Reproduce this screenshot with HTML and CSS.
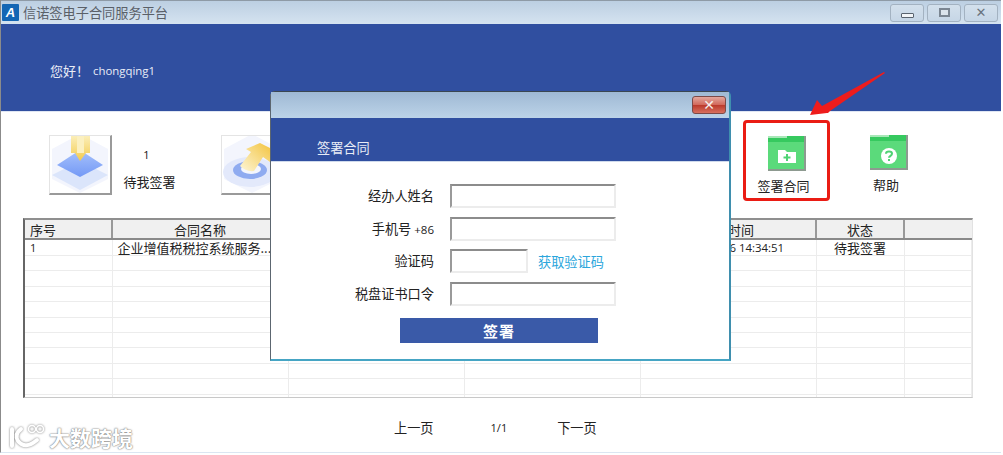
FILE: index.html
```html
<!DOCTYPE html>
<html lang="zh-CN">
  <head>
    <meta charset="UTF-8" />
    <title>信诺签电子合同服务平台</title>
    <link rel="stylesheet" href="styles.css">
  </head>
  <body>
    <div class="window">
      <!-- title bar -->
      <div class="titlebar">
        <span class="app-logo">A</span>
        <span class="app-title">信诺签电子合同服务平台</span>
        <div class="win-buttons">
          <span class="win-btn"><i class="glyph-min"></i></span>
          <span class="win-btn"><i class="glyph-max"></i></span>
          <span class="win-btn glyph-close">&#10005;</span>
        </div>
      </div>

      <div class="banner">
        <span class="hello">您好！</span>
        <span class="user">chongqing1</span>
      </div>

      <!-- toolbar -->
      <div class="toolbar">
        <div class="tool tool-count">
          <div class="tile">
            <svg width="60" height="57" viewBox="0 0 60 57">
              <defs>
                <linearGradient id="pin" x1="0" y1="0" x2="0" y2="1">
                  <stop offset="0" stop-color="#fbeeb8" />
                  <stop offset="1" stop-color="#f3cb4e" />
                </linearGradient>
                <linearGradient id="plate" x1="0" y1="0" x2="0" y2="1">
                  <stop offset="0" stop-color="#a8c2fb" />
                  <stop offset="1" stop-color="#7399f6" />
                </linearGradient>
              </defs>
              <path d="M30 -2 L58 13 V43 L30 57 L2 43 V13 Z" fill="#f3f5fd" />
              <path d="M30 25 L58 39 L30 54 L2 39 Z" fill="#dbe5fb" />
              <path d="M7 29 L30 14 L53 29 L30 41 Z" fill="url(#plate)" />
              <path d="M21 0 H40 V17 H36 L30 25 L25 17 H21 Z" fill="url(#pin)" />
              <rect x="27" width="7" height="17" fill="#fbf0c0" />
            </svg>
          </div>
          <div class="tool-info">
            <span class="num">1</span>
            <span>待我签署</span>
          </div>
        </div>

        <div class="tool tool-wide">
          <div class="tile">
            <svg width="60" height="57" viewBox="0 0 60 57">
              <defs>
                <linearGradient id="lift" x1="0" y1="1" x2="1" y2="0">
                  <stop offset="0" stop-color="#fdf6d8" />
                  <stop offset="1" stop-color="#f3c440" />
                </linearGradient>
              </defs>
              <path d="M30 -2 L58 13 V43 L30 57 L2 43 V13 Z" fill="#f3f5fd" />
              <ellipse cx="28" cy="36" rx="27" ry="15" fill="#e3e9fb" />
              <ellipse cx="28" cy="34" rx="17" ry="9" fill="#8fabf0" />
              <ellipse cx="29" cy="33" rx="10" ry="5" fill="#f4f6fd" />
              <path d="M18 30 L29 16 L24 13 L38 7 L48 12 L48 26 L41 21 L32 35 Q24 36 18 30 Z" fill="url(#lift)" />
            </svg>
          </div>
        </div>

        <div class="tool tool-sign">
          <svg class="folder" width="38" height="35" viewBox="0 0 38 35">
            <rect width="38" height="35" fill="#8d9a90" />
            <rect width="36" height="33" fill="#5bda7b" />
            <rect width="36" height="6" fill="#36c95f" />
            <rect width="19" height="2" fill="#a8e8b8" />
            <path d="M10 14 H17 L19 16 H28 V27 H10 Z" fill="#fff" />
            <path d="M18 18 H20 V20.500 H22.500 V22.500 H20 V25 H18 V22.500 H15.500 V20.500 H18 Z" fill="#4fd273" />
          </svg>
          <span class="tool-label">签署合同</span>
        </div>

        <div class="tool tool-help">
          <svg class="folder" width="38" height="35" viewBox="0 0 38 35">
            <rect width="38" height="35" fill="#8d9a90" />
            <rect width="36" height="33" fill="#5bda7b" />
            <rect width="36" height="6" fill="#36c95f" />
            <rect width="19" height="2" fill="#a8e8b8" />
            <circle cx="19" cy="21" r="8" fill="#fff" />
            <path d="M16 18.800 C16 15.800 22 15.800 22 18.800 C22 20.800 19 20.800 19 22.800" fill="none" stroke="#4fd273" stroke-width="2" />
            <rect x="18" y="24" width="2" height="2" fill="#4fd273" />
          </svg>
          <span class="tool-label">帮助</span>
        </div>
      </div>

      <!-- contract list -->
      <div class="grid-wrap">
        <table class="grid">
          <colgroup>
            <col class="c1" /><col class="c2" /><col class="c3" /><col class="c3" /><col class="c3" /><col class="c4" /><col />
          </colgroup>
          <thead>
            <tr><th class="left">序号</th><th>合同名称</th><th></th><th></th><th>发起时间</th><th>状态</th><th></th></tr>
          </thead>
          <tbody>
            <tr>
              <td class="seq">1</td>
              <td class="name">企业增值税税控系统服务...</td>
              <td></td>
              <td></td>
              <td class="time">6 14:34:51</td>
              <td class="center">待我签署</td>
              <td></td>
            </tr>
            <tr><td></td><td></td><td></td><td></td><td></td><td></td><td></td></tr>
            <tr><td></td><td></td><td></td><td></td><td></td><td></td><td></td></tr>
            <tr><td></td><td></td><td></td><td></td><td></td><td></td><td></td></tr>
            <tr><td></td><td></td><td></td><td></td><td></td><td></td><td></td></tr>
            <tr><td></td><td></td><td></td><td></td><td></td><td></td><td></td></tr>
            <tr><td></td><td></td><td></td><td></td><td></td><td></td><td></td></tr>
            <tr><td></td><td></td><td></td><td></td><td></td><td></td><td></td></tr>
            <tr><td></td><td></td><td></td><td></td><td></td><td></td><td></td></tr>
            <tr><td></td><td></td><td></td><td></td><td></td><td></td><td></td></tr>
            <tr><td></td><td></td><td></td><td></td><td></td><td></td><td></td></tr>
          </tbody>
        </table>
      </div>

      <div class="pager">
        <span>上一页</span>
        <span class="page-num">1/1</span>
        <span>下一页</span>
      </div>

      <!-- sign dialog -->
      <div class="dialog">
        <div class="dialog-bar">
          <span class="dialog-close">&#10005;</span>
        </div>
        <div class="dialog-head">签署合同</div>
        <form class="dialog-form">
          <label>经办人姓名</label>
          <input type="text" />
          <label>手机号 <small>+86</small></label>
          <input type="text" />
          <label>验证码</label>
          <div class="code-row">
            <input type="text" class="code" />
            <a class="get-code">获取验证码</a>
          </div>
          <label>税盘证书口令</label>
          <input type="text" />
        </form>
        <div class="dialog-submit">签署</div>
      </div>

      <!-- annotation over the screenshot -->
      <svg class="arrow" width="80" height="50" viewBox="0 0 80 50">
        <path d="M1 44 L8 29 L13 35 L75 1 L76 2 L21 40 L19 42 L18 42 Z" fill="#ee1c1c" />
      </svg>

      <div class="watermark">
        <svg width="38" height="26" viewBox="0 0 38 26">
          <path d="M4 5 V22 M13 5 Q6 10 10 17 Q17 26 29 16" fill="none" stroke="#fff" stroke-width="4" stroke-linecap="round" />
          <circle cx="24" cy="5" r="3.500" fill="none" stroke="#fff" stroke-width="1.500" />
          <circle cx="32" cy="5" r="3.500" fill="none" stroke="#fff" stroke-width="1.500" />
        </svg>
        <span>大数跨境</span>
      </div>
    </div>
  </body>
</html>
```

FILE: styles.css
```css
* {
  box-sizing: border-box;
}

body {
  margin: 0;
  background: #fff;
  font-family: "Noto Sans CJK SC", "Liberation Sans", sans-serif;
  font-size: 13px;
  color: #222;
  overflow: hidden;
}

.window {
  position: relative;
  width: 1001px;
  height: 453px;
  border-left: 1px solid #8b8b8b;
  border-bottom: 1px solid #dbe6f2;
  display: flex;
  flex-direction: column;
}

/* title bar */
.titlebar {
  height: 24px;
  flex: none;
  display: flex;
  align-items: center;
  padding-left: 1px;
  border-top: 1px solid #8e9aa6;
  background: linear-gradient(#bccfe2, #d5e3f0);
}

.app-logo {
  width: 17px;
  height: 17px;
  background: #1466b4;
  color: #fff;
  font: italic bold 13px/17px "Liberation Sans", sans-serif;
  text-align: center;
  border-radius: 1px;
}

.app-title {
  margin-left: 4px;
  color: #5a6068;
  font-size: 13.200px;
}

.win-buttons {
  margin-left: auto;
  margin-right: 3px;
  display: flex;
  gap: 3px;
}

.win-btn {
  width: 34px;
  height: 18px;
  border: 1px solid #a3b2c1;
  border-radius: 3px;
  background: linear-gradient(#d3e0ec, #c6d6e6);
  display: flex;
  align-items: center;
  justify-content: center;
}

.glyph-min {
  width: 13px;
  height: 5px;
  margin-top: 5px;
  background: #f2f5f8;
  border: 1px solid #59636e;
  border-radius: 1px;
}

.glyph-max {
  width: 11px;
  height: 9px;
  background: #dbe4ec;
  border: 2px solid #7b8692;
}

.glyph-close {
  color: #6a747e;
  font: bold 13px/16px "DejaVu Sans", sans-serif;
}

.banner {
  height: 88px;
  flex: none;
  display: flex;
  align-items: center;
  gap: 4px;
  padding: 5px 0 0 49px;
  background: #304fa0;
  color: #e8ecf6;
  border-bottom: 1px solid #dfe6f3;
}

.user {
  font-family: "Open Sans", sans-serif;
  font-size: 11.400px;
}

/* toolbar */
.toolbar {
  height: 106px;
  flex: none;
  display: flex;
  padding: 8px 0 0 48px;
}

.tool {
  display: flex;
}

.tool-count {
  width: 172px;
}

.tool-wide {
  width: 522px;
}

.tile {
  width: 63px;
  height: 60px;
  margin-top: 15px;
  background: #fff;
  border-top: 1px solid #e4e4e4;
  border-left: 1px solid #e4e4e4;
  border-right: 2px solid #9a9a9a;
  border-bottom: 2px solid #9a9a9a;
}

.tile svg {
  display: block;
}

.tool-info {
  width: 75px;
  padding-top: 28px;
  display: flex;
  flex-direction: column;
  align-items: center;
  gap: 10px;
}

.num {
  margin-right: 6px;
  font: 11px/14px "Open Sans", sans-serif;
  color: #111;
}

.tool-sign,
.tool-help {
  flex-direction: column;
  align-items: center;
  color: #222;
}

.tool-sign {
  width: 87px;
  height: 81px;
  padding-top: 13px;
  border: 3px solid #ea1c14;
  border-radius: 4px;
}

.tool-help {
  width: 78px;
  margin-left: 20px;
  padding-top: 15px;
}

.tool-label {
  margin-right: 6px;
}

.folder {
  flex: none;
  margin-bottom: 5px;
}

/* contract list */
.grid-wrap {
  width: 950px;
  height: 180px;
  flex: none;
  margin-left: 22px;
  overflow: hidden;
  border-top: 2px solid #8f8f8f;
  border-left: 2px solid #666;
  border-right: 1px solid #e2e2e2;
  border-bottom: 1px solid #c8c8c8;
}

.grid {
  width: 100%;
  table-layout: fixed;
  border-collapse: collapse;
}

.c1 { width: 87px; }
.c2 { width: 176px; }
.c3 { width: 176px; }
.c4 { width: 88px; }

.grid th {
  height: 19px;
  padding: 0;
  background: #f0f0f0;
  border-bottom: 2px solid #8a8a8a;
  border-right: 2px solid #999;
  font-size: 13px;
  font-weight: 400;
  line-height: 17px;
  overflow: hidden;
}

.grid th:last-child {
  border-right: 0;
}

.grid th.left {
  text-align: left;
  padding-left: 5px;
}

.grid td {
  height: 15.400px;
  padding: 0 0 0 5px;
  border-bottom: 1px solid #ececec;
  border-right: 1px solid #ececec;
  font-size: 13px;
  line-height: 15px;
  white-space: nowrap;
  overflow: hidden;
}

.grid td.seq {
  font: 11px/15px "Open Sans", sans-serif;
}

.grid td.center {
  text-align: center;
  padding-left: 0;
}

.grid td.time {
  padding-left: 89px;
  font: 11.400px/15px "Open Sans", sans-serif;
}

.pager {
  display: flex;
  padding: 20px 0 0 393px;
  font-size: 13.200px;
  line-height: 19px;
}

.page-num {
  font: 11px/19px "Open Sans", sans-serif;
  margin: 0 50px 0 57px;
}

/* sign dialog */
.dialog {
  position: absolute;
  left: 269px;
  top: 91px;
  width: 461px;
  height: 270px;
  display: flex;
  flex-direction: column;
  background: #fff;
  border: 1px solid #3a4651;
  border-left-color: #5c6670;
  border-bottom: 2px solid #46a5c4;
  border-right: 2px solid #3f8fae;
  border-radius: 5px 5px 0 0;
  border-top-color: #3b4752;
}

.dialog-bar {
  height: 26px;
  flex: none;
  display: flex;
  justify-content: flex-end;
  padding: 4px 3px 0 0;
  background: linear-gradient(#9fb9d4, #bcd3e8);
}

.dialog-close {
  width: 34px;
  height: 18px;
  border: 1px solid #7c4a48;
  border-radius: 3px;
  background: linear-gradient(#e3a79d 0, #d2695c 48%, #bb3a2c 52%, #d8705f 100%);
  color: #f4eeee;
  font: bold 14px/16px "DejaVu Sans", sans-serif;
  text-align: center;
}

.dialog-head {
  height: 44px;
  flex: none;
  padding: 20px 0 0 46px;
  background: #304fa0;
  color: #e8ecf6;
  font-size: 13.200px;
  line-height: 20px;
  border-bottom: 1px solid #cfdaec;
}

.dialog-form {
  display: grid;
  grid-template-columns: 163px 166px;
  grid-auto-rows: 24px;
  column-gap: 16px;
  row-gap: 8.700px;
  padding-top: 22px;
}

.dialog-form label {
  text-align: right;
  font-size: 13.200px;
  line-height: 24px;
}

.dialog-form small {
  font: 11.500px "Open Sans", sans-serif;
}

.dialog-form input {
  width: 166px;
  height: 24px;
  margin: 0;
  padding: 0;
  background: #fff;
  border-top: 2px solid #8c8c8c;
  border-left: 2px solid #9a9a9a;
  border-right: 2px solid #ececec;
  border-bottom: 2px solid #ececec;
}

.code-row {
  display: flex;
  align-items: center;
  gap: 10px;
}

.dialog-form input.code {
  width: 78px;
}

.get-code {
  color: #2ba6dc;
  font-size: 13.200px;
}

.dialog-submit {
  width: 198px;
  height: 25px;
  margin: 12px 0 0 129px;
  background: #3a5aa8;
  color: #fff;
  font-size: 15px;
  font-weight: 700;
  line-height: 25px;
  text-align: center;
  letter-spacing: 1px;
}

.arrow {
  position: absolute;
  left: 808px;
  top: 71px;
}

.watermark {
  position: absolute;
  left: 7px;
  top: 424px;
  display: flex;
  align-items: center;
  gap: 3px;
  color: #fff;
  font-size: 21px;
  font-weight: 700;
  line-height: 26px;
  text-shadow: 0 0 2px #777, 0 0 1px #777;
}

.watermark svg {
  filter: drop-shadow(0 0 1px #777);
}
```
